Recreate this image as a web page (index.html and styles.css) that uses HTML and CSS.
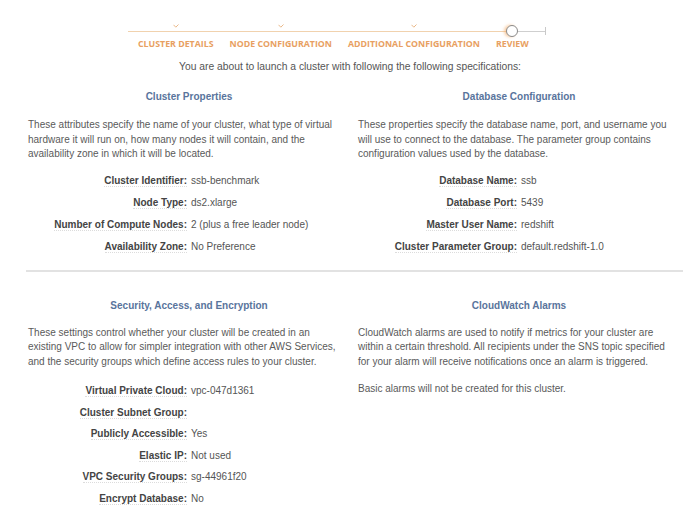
FILE: index.html
```
<!DOCTYPE html>
<html>
<head>
<meta charset="utf-8">
<link rel="stylesheet" href="styles.css">
</head>
<body>
<div class="wizard">
  <div class="step done">
    <span class="mark"><svg width="6" height="4" viewBox="0 0 6 4"><path d="M0.5 0.8 L2.8 3.2 L5.5 0.5" fill="none" stroke="#eab98a" stroke-width="1"/></svg></span>
    <span class="label">CLUSTER DETAILS</span>
  </div>
  <div class="step done">
    <span class="mark"><svg width="6" height="4" viewBox="0 0 6 4"><path d="M0.5 0.8 L2.8 3.2 L5.5 0.5" fill="none" stroke="#eab98a" stroke-width="1"/></svg></span>
    <span class="label">NODE CONFIGURATION</span>
  </div>
  <div class="step done">
    <span class="mark"><svg width="6" height="4" viewBox="0 0 6 4"><path d="M0.5 0.8 L2.8 3.2 L5.5 0.5" fill="none" stroke="#eab98a" stroke-width="1"/></svg></span>
    <span class="label">ADDITIONAL CONFIGURATION</span>
  </div>
  <div class="step current">
    <span class="mark"><span class="circle"></span></span>
    <span class="label">REVIEW</span>
  </div>
</div>

<p class="intro">You are about to launch a cluster with following the following specifications:</p>

<div class="section">
  <div class="panel">
    <h2>Cluster Properties</h2>
    <p class="desc">These attributes specify the name of your cluster, what type of virtual hardware it will run on, how many nodes it will contain, and the availability zone in which it will be located.</p>
    <dl class="props">
      <dt><span>Cluster Identifier:</span></dt><dd>ssb-benchmark</dd>
      <dt><span>Node Type:</span></dt><dd>ds2.xlarge</dd>
      <dt><span>Number of Compute Nodes:</span></dt><dd>2 (plus a free leader node)</dd>
      <dt><span>Availability Zone:</span></dt><dd>No Preference</dd>
    </dl>
  </div>
  <div class="panel">
    <h2>Database Configuration</h2>
    <p class="desc">These properties specify the database name, port, and username you will use to connect to the database. The parameter group contains configuration values used by the database.</p>
    <dl class="props">
      <dt><span>Database Name:</span></dt><dd>ssb</dd>
      <dt><span>Database Port:</span></dt><dd>5439</dd>
      <dt><span>Master User Name:</span></dt><dd>redshift</dd>
      <dt><span>Cluster Parameter Group:</span></dt><dd>default.redshift-1.0</dd>
    </dl>
  </div>
</div>

<hr class="divider">

<div class="section lower">
  <div class="panel">
    <h2>Security, Access, and Encryption</h2>
    <p class="desc">These settings control whether your cluster will be created in an existing VPC to allow for simpler integration with other AWS Services, and the security groups which define access rules to your cluster.</p>
    <dl class="props">
      <dt><span>Virtual Private Cloud:</span></dt><dd>vpc-047d1361</dd>
      <dt><span>Cluster Subnet Group:</span></dt><dd></dd>
      <dt><span>Publicly Accessible:</span></dt><dd>Yes</dd>
      <dt><span>Elastic IP:</span></dt><dd>Not used</dd>
      <dt><span>VPC Security Groups:</span></dt><dd>sg-44961f20</dd>
      <dt><span>Encrypt Database:</span></dt><dd>No</dd>
    </dl>
  </div>
  <div class="panel">
    <h2>CloudWatch Alarms</h2>
    <p class="desc">CloudWatch alarms are used to notify if metrics for your cluster are within a certain threshold. All recipients under the SNS topic specified for your alarm will receive notifications once an alarm is triggered.</p>
    <p class="desc note">Basic alarms will not be created for this cluster.</p>
  </div>
</div>
</body>
</html>
```
FILE: styles.css
```
html, body {
  margin: 0;
  padding: 0;
  background: #fff;
}
body {
  font-family: "Liberation Sans", Arial, sans-serif;
  color: #555;
  font-size: 10px;
}

.wizard {
  display: flex;
  gap: 16px;
  width: 408px;
  margin: 22px 0 0 128px;
  padding-left: 10px;
  background:
    linear-gradient(#c9c9c9, #c9c9c9) no-repeat 417px 5px / 1px 8px,
    linear-gradient(to right, #f1d2ae 0, #f1d2ae 378px, #f3b477 383px, #cfcfcf 390px, #cfcfcf 100%) no-repeat 0 9px / 418px 1px;
}
.step {
  display: flex;
  flex-direction: column;
  align-items: center;
}
.mark {
  height: 16px;
  display: flex;
  align-items: flex-start;
  justify-content: center;
}
.step.done .mark svg {
  margin-top: 2px;
}
.circle {
  display: block;
  width: 10px;
  height: 10px;
  margin-top: 2.5px;
  border: 1.5px solid #8a8a8a;
  border-radius: 50%;
  background: #fff;
  box-shadow: -2px 0 3px rgba(243, 170, 100, 0.6);
}
.label {
  font-family: "Open Sans", sans-serif;
  font-weight: 700;
  font-size: 8.8px;
  line-height: 12px;
  color: #e8a061;
  white-space: nowrap;
}

.intro {
  margin: 10px 0 0 0;
  text-align: center;
  line-height: 14px;
  font-size: 10.3px;
  color: #555;
}

.section {
  display: grid;
  grid-template-columns: 1fr 1fr;
  column-gap: 8px;
  padding: 0 20px 0 28px;
}
.panel h2 {
  margin: 16px 0 0 0;
  text-align: center;
  font-size: 10px;
  line-height: 14px;
  font-weight: 700;
  color: #59749c;
}
.desc {
  margin: 14px 0 0 0;
  padding-right: 8px;
  line-height: 14.5px;
  color: #5a5a5a;
}
.desc.note {
  margin-top: 13px;
}
.props {
  display: grid;
  grid-template-columns: 1fr 1fr;
  column-gap: 4px;
  row-gap: 8px;
  margin: 12px 0 0 0;
  line-height: 14px;
}
.props dt {
  margin: 0;
  text-align: right;
  font-weight: 700;
  color: #444;
}
.props dt span {
  border-bottom: 1px dotted #dcdcdc;
}
.props dd {
  margin: 0;
  color: #555;
}

.divider {
  margin: 16px 17px 0 26px;
  height: 2px;
  border: 0;
  background: #e2e2e2;
}

.lower .panel h2 {
  margin-top: 27px;
}
.lower .desc {
  margin-top: 13px;
}
.lower .props {
  margin-top: 15px;
  row-gap: 7.6px;
}
```
